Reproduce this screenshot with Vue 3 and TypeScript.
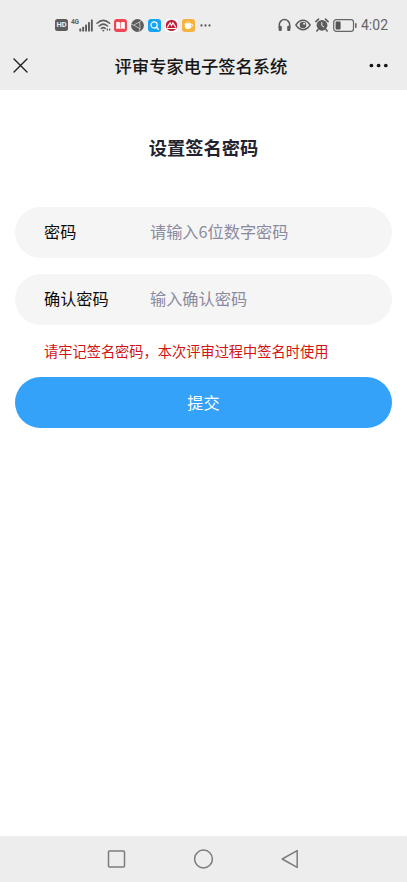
<script setup lang="ts">
import { ref } from 'vue'

interface Field {
  key: string
  label: string
  placeholder: string
}

const fields: Field[] = [
  { key: 'password', label: '密码', placeholder: '请输入6位数字密码' },
  { key: 'confirm', label: '确认密码', placeholder: '输入确认密码' },
]

const values = ref<Record<string, string>>({ password: '', confirm: '' })
</script>

<template>
  <div class="screen">
    <header class="top">
      <div class="status">
        <div class="group">
          <span class="hd">HD</span>
          <span class="cell">
            <span class="gen">4G</span>
            <svg width="14" height="13" viewBox="0 0 14 13" fill="#5c5c5c">
              <rect x="0.3" y="9.6" width="1.9" height="3" rx="0.5" />
              <rect x="3.2" y="7.8" width="1.9" height="4.8" rx="0.5" />
              <rect x="6.1" y="5.6" width="1.9" height="7" rx="0.5" />
              <rect x="9" y="3" width="1.9" height="9.6" rx="0.5" />
              <rect x="11.9" y="0.4" width="1.9" height="12.2" rx="0.5" />
            </svg>
          </span>
          <svg class="wifi" width="16" height="13" viewBox="0 0 16 13" fill="none" stroke="#5f5f5f" stroke-width="1.5" stroke-linecap="round">
            <path d="M1 4.3Q7.3 -1.5 13.6 4.3M3.1 7Q7.3 3.2 11.5 7M5.2 9.5Q7.3 7.8 9.2 9.4" />
            <path d="M7.3 11.6h.1" stroke-width="1.9" />
            <path d="M11.3 10.3v.8M13.7 10.3v.8" stroke-width="1.4" />
          </svg>
          <svg class="app" width="13" height="13" viewBox="0 0 13 13">
            <rect width="13" height="13" rx="3" fill="#ed4753" />
            <path d="M2.2 3.2Q4.8 2.6 6.2 3.5V10Q4.7 9.3 2.2 9.9ZM10.8 3.2Q8.2 2.6 6.8 3.5V10Q8.3 9.3 10.8 9.9Z" fill="#fff" />
          </svg>
          <svg class="app" width="13" height="13" viewBox="0 0 13 13">
            <circle cx="6.5" cy="6.5" r="6.4" fill="#5c5c5c" />
            <path d="M2.7 6.1 8.7 2.9 9 9.8ZM8.7 2.9 10.9.9M2.7 6.1.2 5.5M9 9.8 7.8 12.8" fill="none" stroke="#d8d8d8" stroke-width="0.8" />
          </svg>
          <svg class="app" width="13" height="13" viewBox="0 0 13 13">
            <rect width="13" height="13" rx="3" fill="#16a5f4" />
            <circle cx="6.1" cy="6" r="3.1" fill="none" stroke="#fff" stroke-width="1.2" />
            <path d="m8.4 8.3 2 2" stroke="#fff" stroke-width="1.3" stroke-linecap="round" />
          </svg>
          <svg class="app" width="13" height="13" viewBox="0 0 13 13">
            <rect width="13" height="13" rx="3" fill="#fff" />
            <circle cx="6.5" cy="6.4" r="5.7" fill="#bd1f3c" />
            <path d="M2.2 8.4 5.1 3.8 6.5 6.6 7.9 3.8 10.8 8.4M1.9 9.5h9.2" fill="none" stroke="#fff" stroke-width="1.1" />
          </svg>
          <svg class="app" width="13" height="13" viewBox="0 0 13 13">
            <rect width="13" height="13" rx="3" fill="#f7b23e" />
            <path d="M2.8 4.3H9V7.6Q9 9.9 6.9 9.9H5Q2.8 9.9 2.8 7.6Z" fill="#fff" />
            <path d="M9 5.2Q10.9 5 10.6 6.5T8.8 8M4.8 2.5v1M6.8 2.5v1" fill="none" stroke="#fff" stroke-width="0.9" />
          </svg>
          <svg class="more" width="11" height="3" viewBox="0 0 11 3" fill="#5d5d5d">
            <circle cx="1.5" cy="1.5" r="1.15" /><circle cx="5.5" cy="1.5" r="1.15" /><circle cx="9.5" cy="1.5" r="1.15" />
          </svg>
        </div>
        <div class="group right">
          <svg width="13" height="14" viewBox="0 0 13 14">
            <path d="M1.3 10V6.8a5.2 5.2 0 0 1 10.4 0V10" fill="none" stroke="#5c5c5c" stroke-width="1.5" />
            <rect x="0.6" y="7.8" width="3.2" height="5.2" rx="1.1" fill="#5c5c5c" />
            <rect x="9.2" y="7.8" width="3.2" height="5.2" rx="1.1" fill="#5c5c5c" />
          </svg>
          <svg class="eye" width="16" height="12" viewBox="0 0 16 12">
            <path d="M.9 6Q4 1.3 8 1.3T15.1 6Q12 10.7 8 10.7T.9 6Z" fill="none" stroke="#5c5c5c" stroke-width="1.4" />
            <circle cx="8" cy="6" r="3.3" fill="#5c5c5c" />
            <circle cx="9.1" cy="4.8" r="1" fill="#ededed" />
          </svg>
          <svg class="alarm" width="14" height="14" viewBox="0 0 14 14">
            <circle cx="7" cy="7.3" r="5.4" fill="#5c5c5c" />
            <path d="M.9 3.6 3.5 1.1M13.1 3.6 10.5 1.1M3 11.6 1.9 13M11 11.6l1.1 1.4" stroke="#5c5c5c" stroke-width="1.6" stroke-linecap="round" />
            <path d="M6.8 4.1v3.5l2.3 1.5" fill="none" stroke="#ededed" stroke-width="1" />
          </svg>
          <svg class="battery" width="24" height="13" viewBox="0 0 24 13">
            <rect x="0.7" y="0.7" width="19.8" height="11.6" rx="2.6" fill="none" stroke="#666" stroke-width="1.2" />
            <rect x="2.6" y="2.6" width="5" height="7.8" rx="0.8" fill="#555" />
            <rect x="22" y="4" width="1.6" height="5" rx="0.7" fill="#666" />
          </svg>
          <span class="time">4:02</span>
        </div>
      </div>
      <nav class="bar">
        <svg width="15" height="15" viewBox="0 0 15 15" stroke="#202020" stroke-width="1.4" stroke-linecap="round">
          <path d="m1 1 13 13M14 1 1 14" />
        </svg>
        <h1>评审专家电子签名系统</h1>
        <svg width="19" height="5" viewBox="0 0 19 5" fill="#141414">
          <circle cx="2.4" cy="2.5" r="1.85" /><circle cx="9.6" cy="2.5" r="1.85" /><circle cx="16.8" cy="2.5" r="1.85" />
        </svg>
      </nav>
    </header>

    <main>
      <h2>设置签名密码</h2>
      <form @submit.prevent>
        <label v-for="field in fields" :key="field.key" class="field">
          <span class="label">{{ field.label }}</span>
          <input v-model="values[field.key]" type="password" inputmode="numeric" :placeholder="field.placeholder" />
        </label>
        <p class="hint">请牢记签名密码，本次评审过程中签名时使用</p>
        <button type="submit">提交</button>
      </form>
    </main>

    <footer>
      <svg width="20" height="20" viewBox="0 0 20 20"><rect x="1.5" y="2" width="16" height="16" rx="1" /></svg>
      <svg width="20" height="20" viewBox="0 0 20 20"><circle cx="9.5" cy="10" r="8.9" /></svg>
      <svg width="20" height="20" viewBox="0 0 20 20"><path d="M16.2 1.6v16.8L1.2 10Z" stroke-linejoin="round" /></svg>
    </footer>
  </div>
</template>

<style>
body {
  margin: 0;
  background: #fff;
}
</style>

<style scoped>
.screen {
  display: flex;
  flex-direction: column;
  height: 882px;
  background: #fff;
  font-family: 'Noto Sans CJK SC', sans-serif;
}

.top {
  height: 90px;
  flex: none;
  background: #ededed;
}

.status {
  display: flex;
  justify-content: space-between;
  height: 41px;
  padding: 9px 19px 0 55px;
  box-sizing: border-box;
}

.group {
  display: flex;
  align-items: center;
  height: 32px;
}

.hd {
  width: 13px;
  height: 12px;
  border-radius: 2.5px;
  background: #5c5c5c;
  color: #ededed;
  font: bold 7.5px/12px Roboto, sans-serif;
  text-align: center;
}

.cell {
  display: flex;
  align-items: flex-end;
  height: 13px;
  margin-left: 3px;
}

.gen {
  align-self: flex-start;
  width: 7.5px;
  margin-top: -1px;
  color: #5c5c5c;
  font: bold 6.5px/8px Roboto, sans-serif;
  letter-spacing: -0.3px;
}

.wifi {
  margin-left: 3.5px;
  margin-right: -1px;
}

.app {
  margin-left: 4px;
}

.wifi + .app {
  margin-left: 3px;
}

.more {
  margin-left: 5px;
}

.eye {
  margin-left: 4px;
}

.alarm {
  margin-left: 4px;
}

.battery {
  margin-left: 4.5px;
}

.time {
  width: 27px;
  margin-left: 4px;
  color: #666;
  font: 14px/32px Roboto, sans-serif;
  white-space: nowrap;
}

.bar {
  display: flex;
  align-items: center;
  justify-content: space-between;
  height: 49px;
  padding: 0 19px 0 13px;
}

h1 {
  margin: 0 0 0 5px;
  color: #161616;
  font-size: 17.3px;
  font-weight: 500;
  line-height: 26px;
}

main {
  flex: 1;
  padding: 43px 15px 0;
}

h2 {
  margin: 0 0 46px;
  color: #23232f;
  font-size: 18.3px;
  font-weight: 700;
  line-height: 28px;
  text-align: center;
}

.field {
  display: flex;
  align-items: center;
  height: 51px;
  margin-bottom: 16px;
  padding: 0 0 3px 29px;
  box-sizing: border-box;
  border-radius: 26px;
  background: #f5f5f5;
  font-size: 16.2px;
}

.label {
  width: 106px;
  color: #0c0c0c;
}

input {
  flex: 1;
  min-width: 0;
  margin-right: 24px;
  padding: 0;
  border: 0;
  outline: 0;
  background: transparent;
  font: inherit;
}

input::placeholder {
  color: #8a8a9f;
  opacity: 1;
}

.hint {
  margin: 0 0 15px 29px;
  color: #d21313;
  font-size: 14.22px;
  line-height: 21px;
  white-space: nowrap;
}

button {
  display: block;
  width: 100%;
  height: 51px;
  padding: 0 0 2px;
  border: 0;
  border-radius: 26px;
  background: #34a2f8;
  color: #fff;
  font: 16.2px 'Noto Sans CJK SC', sans-serif;
}

footer {
  display: flex;
  align-items: center;
  justify-content: center;
  gap: 67px;
  height: 46px;
  flex: none;
  background: #ededed;
}

footer svg {
  fill: none;
  stroke: #7c7c7c;
  stroke-width: 1.5;
}
</style>
